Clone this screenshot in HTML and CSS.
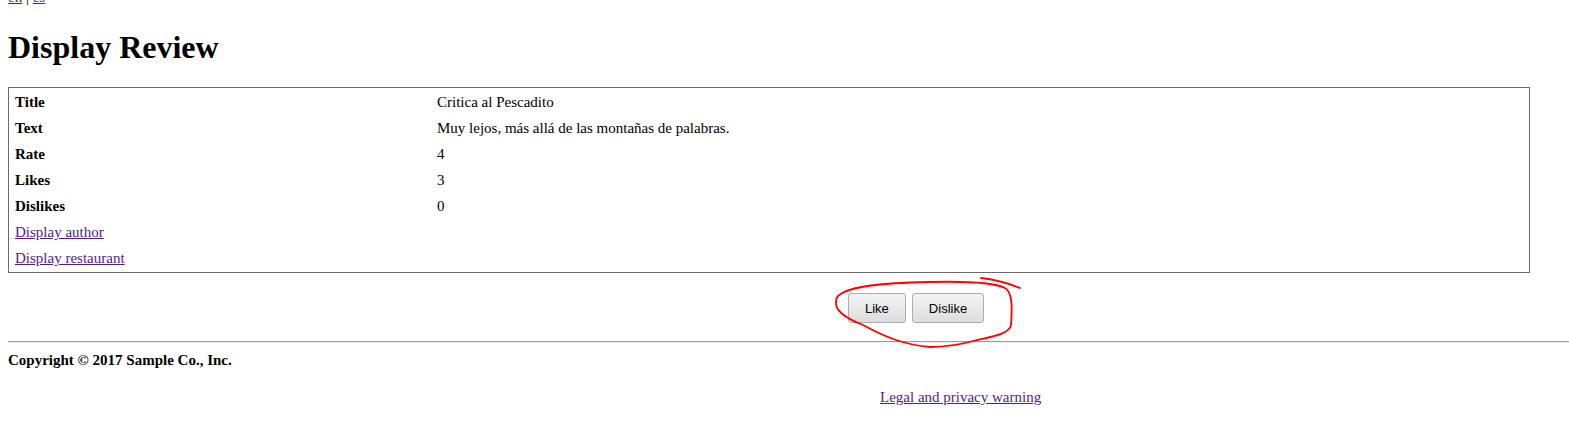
FILE: index.html
```html
<!DOCTYPE html>
<html>
<head>
<meta charset="utf-8">
<title>Display Review</title>
<link rel="stylesheet" href="styles.css">
</head>
<body>
<div class="lang"><a href="#">en</a> | <a href="#">es</a></div>
<h1 class="title">Display Review</h1>
<table class="review">
  <tr><td class="label">Title</td><td class="value">Critica al Pescadito</td></tr>
  <tr><td class="label">Text</td><td class="value">Muy lejos, más allá de las montañas de palabras.</td></tr>
  <tr><td class="label">Rate</td><td class="value">4</td></tr>
  <tr><td class="label">Likes</td><td class="value">3</td></tr>
  <tr><td class="label">Dislikes</td><td class="value">0</td></tr>
  <tr><td class="link-cell"><a href="#">Display author</a></td><td></td></tr>
  <tr><td class="link-cell"><a href="#">Display restaurant</a></td><td></td></tr>
</table>
<div class="actions">
  <button class="btn" type="button">Like</button>
  <button class="btn" type="button">Dislike</button>
</div>
<div class="rule"></div>
<div class="copyright">Copyright © 2017 Sample Co., Inc.</div>
<div class="legal"><a href="#">Legal and privacy warning</a></div>
<svg class="annotation" width="1569" height="421" viewBox="0 0 1569 421" xmlns="http://www.w3.org/2000/svg">
  <path d="M 981 278 Q 1000 280 1020 288" fill="none" stroke="#ff0000" stroke-width="1.8" stroke-linecap="round"/>
  <path d="M 838 296 C 846 288 870 283 930 282 C 970 281 995 283 1005 288 C 1013 292 1012 310 1011 325 C 1010 334 990 337 977 340 C 960 345 945 347 930 347 C 905 345 885 337 863 325 C 845 318 835 310 836 302 C 836 299 837 297 838 296" fill="none" stroke="#ff0000" stroke-width="1.8" stroke-linecap="round" stroke-linejoin="round"/>
</svg>
</body>
</html>
```
FILE: styles.css
```css
body {
  margin: 0;
  padding: 0 8px;
  font-family: "Liberation Serif", "Times New Roman", serif;
  font-size: 15px;
  line-height: 17px;
  color: #000;
  background: #fff;
}
a {
  color: #551a8b;
  text-decoration: underline;
}
.lang {
  margin-top: -11px;
}
.title {
  font-size: 32px;
  line-height: 36px;
  font-weight: bold;
  margin: 23px 0 22px;
}
.review {
  width: 98%;
  table-layout: fixed;
  border: 1px solid #6a6a6a;
  border-collapse: separate;
  border-spacing: 0;
  padding: 1px 0;
}
.review td {
  padding: 0 6px;
  line-height: 26px;
  height: 26px;
  vertical-align: middle;
  white-space: nowrap;
}
.review td:first-child {
  width: 410px;
}
.label {
  font-weight: bold;
}
.actions {
  display: flex;
  gap: 6px;
  margin-top: 20px;
  padding-left: 840px;
}
.btn {
  height: 30px;
  padding: 0 16px;
  font-family: "Liberation Sans", Arial, sans-serif;
  font-size: 13px;
  color: #000;
  background: linear-gradient(#f3f3f3, #e9e9e9 50%, #dcdcdc);
  border: 1px solid #acacac;
  border-radius: 3px;
}
.rule {
  margin: 18px -8px 0 0;
  border-top: 1px solid #9c9c9c;
  border-bottom: 1px solid #eeeeee;
}
.copyright {
  margin-top: 9px;
  font-weight: bold;
}
.legal {
  margin-top: 20px;
  padding-left: 872px;
}
.annotation {
  position: absolute;
  top: 0;
  left: 0;
  pointer-events: none;
}
```
